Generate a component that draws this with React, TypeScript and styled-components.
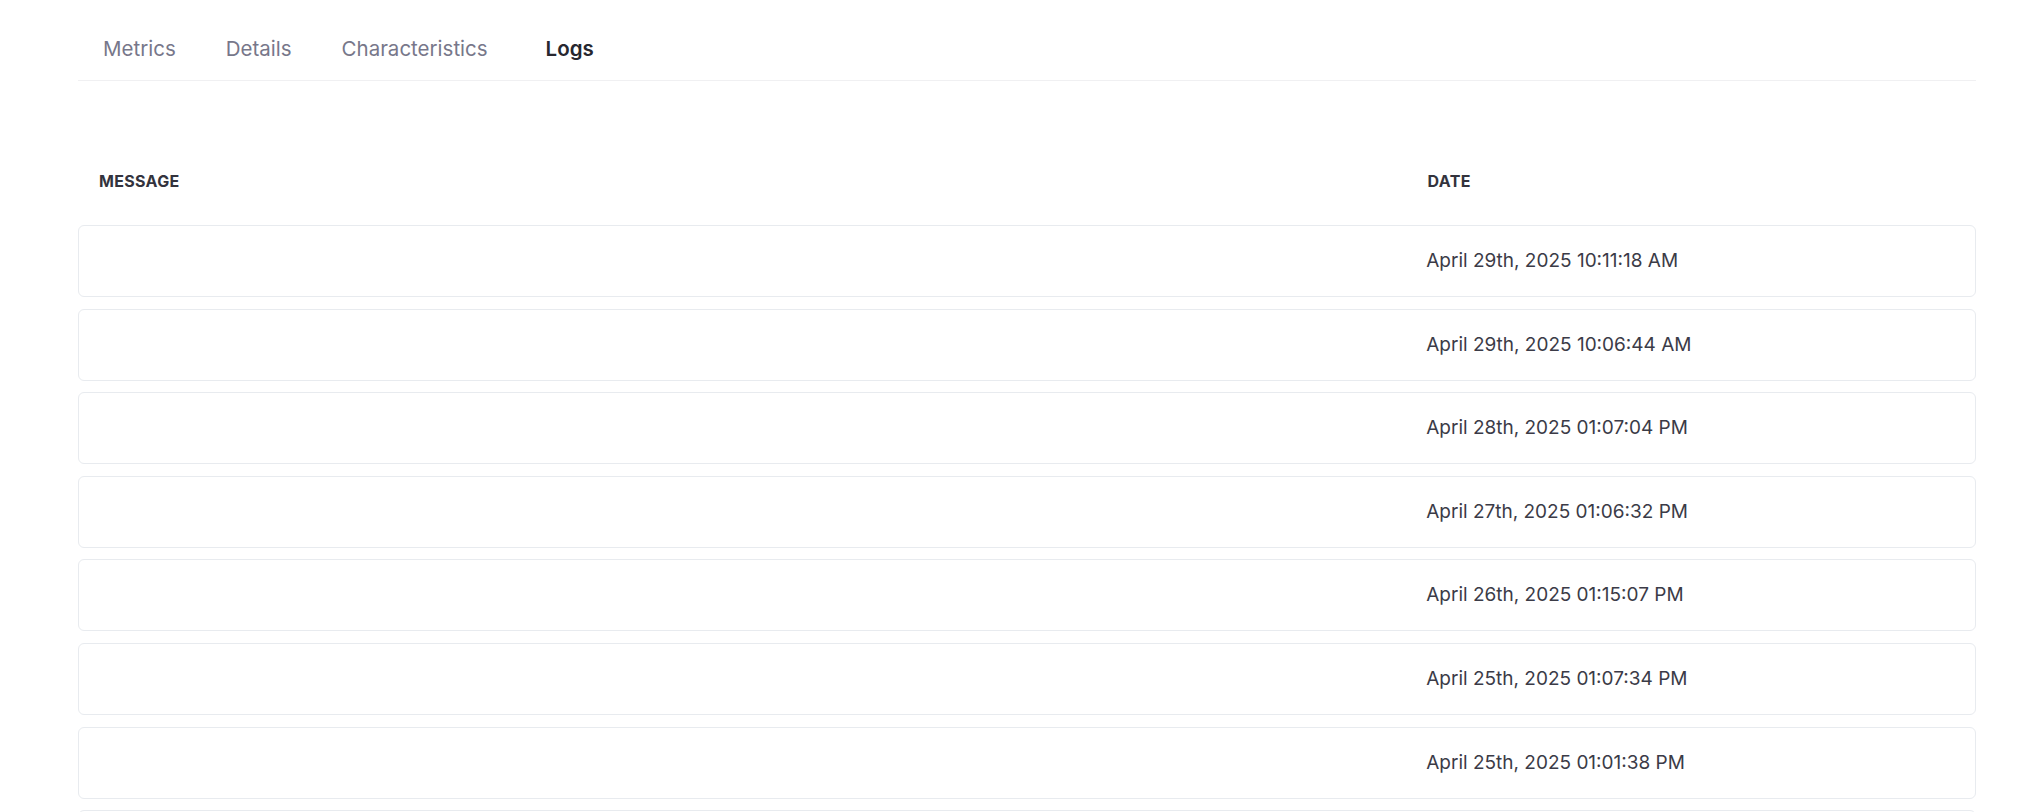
import React from 'react';
import styled, { createGlobalStyle } from 'styled-components';

const GlobalStyle = createGlobalStyle`
  * { box-sizing: border-box; }
  body {
    margin: 0;
    background: #ffffff;
    font-family: Inter, "Noto Sans", "Liberation Sans", sans-serif;
    -webkit-font-smoothing: antialiased;
  }
`

const Page = styled.div`
  padding-left: 78px;
  width: 1976px;
`

const TabBar = styled.nav`
  display: flex;
  border-bottom: 1px solid #f0f0f2;
`

const Tab = styled.button<{ $active?: boolean }>`
  border: 0;
  background: none;
  padding: 35px 25px 18px;
  margin-left: ${(p) => (p.$active ? '8px' : '0')};
  font-family: inherit;
  font-size: 20.5px;
  line-height: 27px;
  font-weight: ${(p) => (p.$active ? 600 : 400)};
  color: ${(p) => (p.$active ? '#27272f' : '#77778a')};
  cursor: pointer;
`

const Table = styled.div`
  display: flex;
  flex-direction: column;
  padding-top: 90px;
`

const HeadRow = styled.div`
  display: grid;
  grid-template-columns: 70% 30%;
  margin-bottom: 34px;
`

const HeadCell = styled.div`
  padding-left: 21px;
  font-size: 16px;
  line-height: 20px;
  font-weight: 700;
  letter-spacing: 0.02em;
  text-transform: uppercase;
  color: #33333d;
`

const Row = styled.div`
  display: grid;
  grid-template-columns: 70% 30%;
  align-items: center;
  height: 72px;
  margin-bottom: 11.6px;
  border: 1px solid #e8ebef;
  border-radius: 6px;
  background: #fff;
`

const Cell = styled.div`
  padding-left: 20px;
  font-size: 19px;
  line-height: 26px;
  color: #3b3b47;
  white-space: nowrap;
`

const tabs = ['Metrics', 'Details', 'Characteristics', 'Logs'];

const logs = [
  { message: '', date: 'April 29th, 2025 10:11:18 AM' },
  { message: '', date: 'April 29th, 2025 10:06:44 AM' },
  { message: '', date: 'April 28th, 2025 01:07:04 PM' },
  { message: '', date: 'April 27th, 2025 01:06:32 PM' },
  { message: '', date: 'April 26th, 2025 01:15:07 PM' },
  { message: '', date: 'April 25th, 2025 01:07:34 PM' },
  { message: '', date: 'April 25th, 2025 01:01:38 PM' },
  { message: '', date: 'April 24th, 2025 01:05:12 PM' },
];

export default function App() {
  return (
    <>
      <GlobalStyle />
      <Page>
        <TabBar>
          {tabs.map((t) => (
            <Tab key={t} $active={t === 'Logs'}>{t}</Tab>
          ))}
        </TabBar>
        <Table>
          <HeadRow>
            <HeadCell>Message</HeadCell>
            <HeadCell>Date</HeadCell>
          </HeadRow>
          {logs.map((l, i) => (
            <Row key={i}>
              <Cell>{l.message}</Cell>
              <Cell>{l.date}</Cell>
            </Row>
          ))}
        </Table>
      </Page>
    </>
  );
}
